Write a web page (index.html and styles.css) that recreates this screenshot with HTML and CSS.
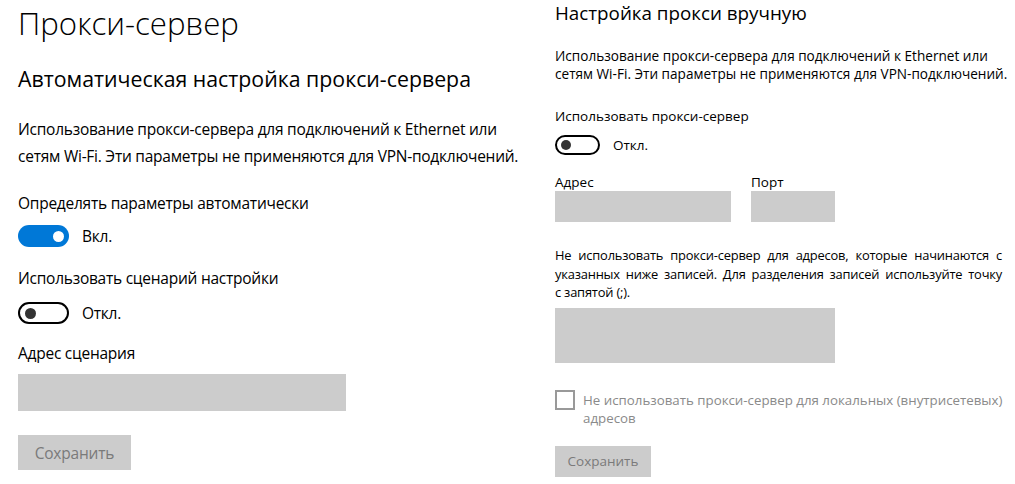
FILE: index.html
```html
<!DOCTYPE html>
<html lang="ru">
<head>
<meta charset="utf-8">
<title>Прокси-сервер</title>
<link rel="stylesheet" href="styles.css">
</head>
<body>
<div class="page">
  <section class="panel panel-left">
    <h1 class="title">Прокси-сервер</h1>
    <h2 class="subtitle">Автоматическая настройка прокси-сервера</h2>
    <p class="desc">Использование прокси-сервера для подключений к Ethernet или сетям Wi-Fi. Эти параметры не применяются для VPN-подключений.</p>
    <div class="label l1">Определять параметры автоматически</div>
    <div class="toggle-row t1">
      <span class="toggle on"><span class="knob"></span></span>
      <span class="toggle-text">Вкл.</span>
    </div>
    <div class="label l2">Использовать сценарий настройки</div>
    <div class="toggle-row t2">
      <span class="toggle off"><span class="knob"></span></span>
      <span class="toggle-text">Откл.</span>
    </div>
    <div class="label l3">Адрес сценария</div>
    <div class="input script-input"></div>
    <div class="btn">Сохранить</div>
  </section>

  <section class="panel panel-right">
    <h2 class="r-title">Настройка прокси вручную</h2>
    <p class="r-desc">Использование прокси-сервера для подключений к Ethernet или сетям Wi-Fi. Эти параметры не применяются для VPN-подключений.</p>
    <div class="r-label r-l1">Использовать прокси-сервер</div>
    <div class="r-toggle-row">
      <span class="r-toggle off"><span class="knob"></span></span>
      <span class="r-toggle-text">Откл.</span>
    </div>
    <div class="addr-row">
      <div class="field">
        <div class="r-label">Адрес</div>
        <div class="input addr-input"></div>
      </div>
      <div class="field">
        <div class="r-label">Порт</div>
        <div class="input port-input"></div>
      </div>
    </div>
    <p class="r-para">Не использовать прокси-сервер для адресов, которые начинаются с указанных ниже записей. Для разделения записей используйте точку <span class="keep">с запятой (;).</span></p>
    <div class="input exceptions"></div>
    <div class="check-row">
      <span class="checkbox"></span>
      <span class="check-text">Не использовать прокси-сервер для локальных (внутрисетевых) адресов</span>
    </div>
    <div class="r-btn">Сохранить</div>
  </section>
</div>
</body>
</html>
```

FILE: styles.css
```css
html, body {
  margin: 0;
  padding: 0;
  background: #ffffff;
}

body {
  font-family: "Open Sans", "Noto Sans", sans-serif;
  color: #000000;
  width: 1015px;
  height: 484px;
  overflow: hidden;
}

.page {
  display: flex;
  flex-direction: row;
}

/* ---------- left panel ---------- */
.panel-left {
  width: 537px;
  padding-left: 18px;
  flex: none;
}

.title {
  margin: 3px 0 0;
  font-size: 31.2px;
  font-weight: 300;
  line-height: 40px;
}

.subtitle {
  margin: 21px 0 0;
  font-size: 21.3px;
  font-weight: 400;
  line-height: 30px;
}

.desc {
  margin: 22px 0 0;
  font-size: 15.5px;
  letter-spacing: -0.25px;
  line-height: 27px;
  width: 510px;
}

.label {
  font-size: 15.5px;
  letter-spacing: -0.25px;
  line-height: 27px;
}

.l1 { margin-top: 20px; }
.l2 { margin-top: 18px; }
.l3 { margin-top: 16px; }

.toggle-row {
  display: flex;
  align-items: center;
  gap: 13px;
  height: 22px;
}

.t1 { margin-top: 8px; }
.t2 { margin-top: 10px; }

.toggle-text {
  font-size: 15.5px;
  letter-spacing: -0.25px;
}

.toggle {
  box-sizing: border-box;
  width: 51px;
  height: 22px;
  border-radius: 11px;
  display: flex;
  align-items: center;
  flex: none;
}

.toggle.on {
  background: #0078d7;
  justify-content: flex-end;
  padding-right: 5px;
}

.toggle.on .knob {
  width: 11px;
  height: 11px;
  border-radius: 50%;
  background: #ffffff;
}

.toggle.off {
  border: 2px solid #000000;
  padding-left: 5px;
}

.toggle.off .knob,
.r-toggle.off .knob {
  width: 11px;
  height: 11px;
  border-radius: 50%;
  background: #333333;
}

.input {
  background: #cccccc;
}

.script-input {
  margin-top: 7px;
  width: 328px;
  height: 37px;
}

.btn {
  margin-top: 24px;
  width: 113px;
  height: 35px;
  background: #cccccc;
  color: #7a7a7a;
  font-size: 15.5px;
  letter-spacing: -0.2px;
  display: flex;
  align-items: center;
  justify-content: center;
}

/* ---------- right panel ---------- */
.panel-right {
  flex: none;
  width: 460px;
}

.r-title {
  margin: 0;
  font-size: 18.8px;
  font-weight: 400;
  line-height: 27px;
}

.r-desc {
  margin: 20px 0 0;
  font-size: 13.6px;
  line-height: 18px;
  width: 455px;
}

.r-label {
  font-size: 13.5px;
  line-height: 18px;
}

.r-l1 { margin-top: 24px; }

.r-toggle-row {
  margin-top: 10px;
  display: flex;
  align-items: center;
  gap: 13px;
  height: 20px;
}

.r-toggle {
  box-sizing: border-box;
  width: 45px;
  height: 20px;
  border-radius: 10px;
  display: flex;
  align-items: center;
  flex: none;
}

.r-toggle.off {
  border: 2px solid #000000;
  padding-left: 4px;
}

.r-toggle.off .knob {
  width: 10px;
  height: 10px;
}

.r-toggle-text {
  font-size: 13.5px;
}

.addr-row {
  margin-top: 18px;
  display: flex;
  gap: 20px;
}

.addr-input {
  width: 176px;
  height: 31px;
}

.port-input {
  width: 84px;
  height: 31px;
}

.r-para {
  margin: 24px 0 0;
  font-size: 12.9px;
  letter-spacing: -0.2px;
  word-spacing: -1.5px;
  line-height: 18.5px;
  width: 447px;
  text-align: justify;
}

.r-para .keep {
  white-space: nowrap;
  word-spacing: 0;
}

.exceptions {
  margin-top: 6px;
  width: 280px;
  height: 55px;
}

.check-row {
  margin-top: 27px;
  display: flex;
  align-items: flex-start;
  gap: 8px;
}

.checkbox {
  box-sizing: border-box;
  width: 20px;
  height: 20px;
  border: 2px solid #999999;
  flex: none;
}

.check-text {
  color: #8a8a8a;
  font-size: 13.3px;
  line-height: 18px;
  margin-top: 1px;
  width: 430px;
}

.r-btn {
  margin-top: 19px;
  width: 96px;
  height: 31px;
  background: #cccccc;
  color: #7a7a7a;
  font-size: 13.5px;
  display: flex;
  align-items: center;
  justify-content: center;
}
```
